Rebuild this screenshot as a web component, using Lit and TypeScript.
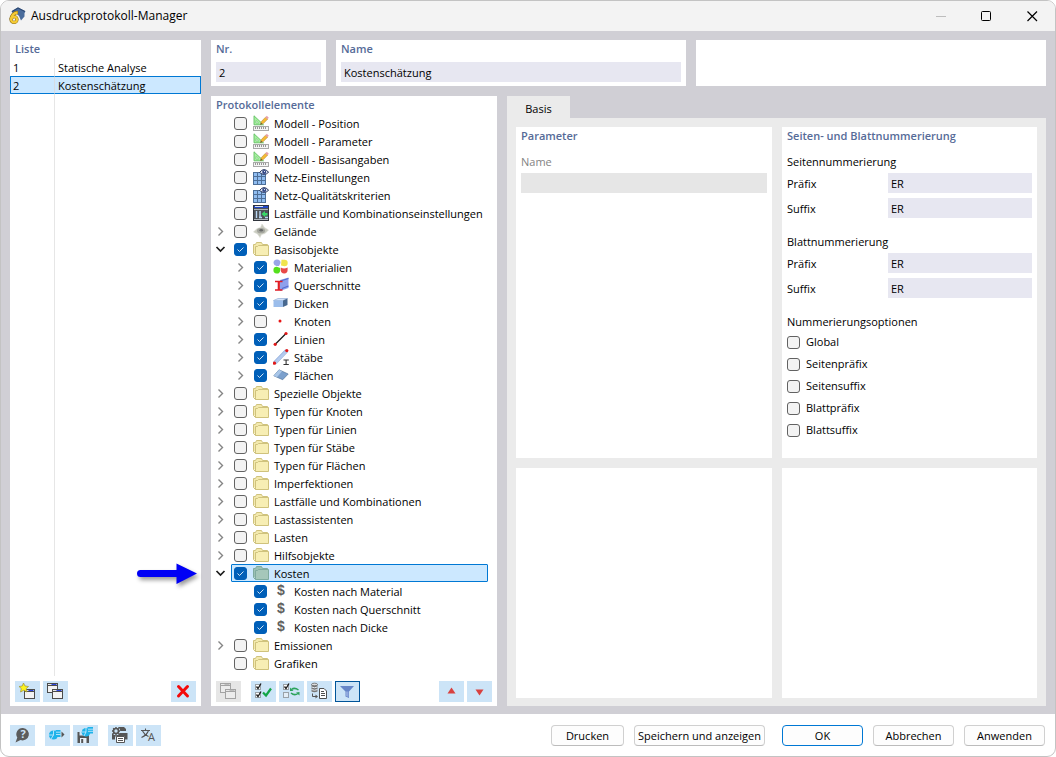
import { LitElement, html, css, svg, nothing, TemplateResult } from "lit";
import { customElement, property, state } from "lit/decorators.js";
import { classMap } from "lit/directives/class-map.js";

interface TreeItem {
  label: string;
  icon: string;
  checked?: boolean;
  expandable?: boolean;
  selected?: boolean;
  children?: TreeItem[];
}

const folder = (label: string): TreeItem => ({ label, icon: "folder", expandable: true });

const TREE: TreeItem[] = [
  { label: "Modell - Position", icon: "model" },
  { label: "Modell - Parameter", icon: "model" },
  { label: "Modell - Basisangaben", icon: "model" },
  { label: "Netz-Einstellungen", icon: "mesh" },
  { label: "Netz-Qualitätskriterien", icon: "mesh" },
  { label: "Lastfälle und Kombinationseinstellungen", icon: "loadcase" },
  { label: "Gelände", icon: "terrain", expandable: true },
  {
    label: "Basisobjekte",
    icon: "folder",
    checked: true,
    expandable: true,
    children: [
      { label: "Materialien", icon: "material", checked: true, expandable: true },
      { label: "Querschnitte", icon: "section", checked: true, expandable: true },
      { label: "Dicken", icon: "thickness", checked: true, expandable: true },
      { label: "Knoten", icon: "node", expandable: true },
      { label: "Linien", icon: "line", checked: true, expandable: true },
      { label: "Stäbe", icon: "member", checked: true, expandable: true },
      { label: "Flächen", icon: "surface", checked: true, expandable: true },
    ],
  },
  folder("Spezielle Objekte"),
  folder("Typen für Knoten"),
  folder("Typen für Linien"),
  folder("Typen für Stäbe"),
  folder("Typen für Flächen"),
  folder("Imperfektionen"),
  folder("Lastfälle und Kombinationen"),
  folder("Lastassistenten"),
  folder("Lasten"),
  folder("Hilfsobjekte"),
  {
    label: "Kosten",
    icon: "folderSelected",
    checked: true,
    expandable: true,
    selected: true,
    children: [
      { label: "Kosten nach Material", icon: "cost", checked: true },
      { label: "Kosten nach Querschnitt", icon: "cost", checked: true },
      { label: "Kosten nach Dicke", icon: "cost", checked: true },
    ],
  },
  folder("Emissionen"),
  { label: "Grafiken", icon: "folder" },
];

const folderShape = (back: string, front: string, edge: string) => svg`
  <path d="M.5 12.5V3.5H2.500L3.500 1.500H8.500L9.500 3.500H14.500V12" fill=${back} stroke=${edge}/>
  <path d="M2.500 14.500H15.500V4.500H5.500L4.500 5.500H2.500Z" fill=${front} stroke=${edge}/>
  <path d="M.5 12.500L2.500 14.500" fill="none" stroke=${edge}/>`;

const windowShape = (x: number, y: number, edge: string, bar: string, fill: string) => svg`
  <rect x=${x} y=${y} width="10" height="9" fill=${fill} stroke=${edge}/>
  <path d="M${x} ${y + 2}h10" stroke=${edge}/>
  <path d="M${x + 1} ${y + 1}h4" stroke="#e8e8e8"/>
  <path d="M${x + 4} ${y + 1}h5" stroke=${bar}/>`;

const tickBox = (x: number, y: number, ticked = true) => svg`
  <rect x=${x} y=${y} width="5" height="5" fill=${ticked ? "#fff" : "#e4eef6"} stroke="#9aa2a8"/>
  ${ticked ? svg`<path d="M${x + 1} ${y + 2}l1.500 2l3-5" fill="none" stroke="#1c1c1c" stroke-width="1.300"/>` : nothing}`;

/* Glyphs of the element tree, on a 16 × 16 grid. */
const TREE_ICONS: Record<string, TemplateResult> = {
  folder: svg`${folderShape("#f3e9ad", "#f7eeb4", "#cfc27c")}`,
  folderSelected: svg`${folderShape("#9cc1b4", "#a5c7ba", "#7fab9f")}`,
  model: svg`
    <path d="M1 .8V9.800H10.500Z" fill="#a6f0a0" stroke="#62c062" stroke-width=".9"/>
    <path d="M3 5.500V8H5.600Z" fill="#fff" stroke="#62c062" stroke-width=".6"/>
    <path d="M7.500 9.500L8.300 6.600L12.500 2.200L14.600 4.200L10.300 8.600Z" fill="#f6ba35" stroke="#a8812f" stroke-width=".5"/>
    <path d="M12.300 2.400L13.800 .8L15.800 2.800L14.400 4.300Z" fill="#e7a0a8"/>
    <path d="M7.300 9.800L8 7.800L9.200 9Z" fill="#554a35"/>
    <rect x=".5" y="11.500" width="15" height="4" fill="#f4f4f4" stroke="#a8a8a8"/>
    <path d="M2.500 12v2M4.500 12v2M6.500 12v2M8.500 12v2M10.500 12v2M12.500 12v2" stroke="#808080" stroke-width=".8"/>`,
  mesh: svg`
    <rect x=".5" y="3.500" width="12" height="12" fill="#8fbcf0" stroke="#4d6f98"/>
    <path d="M4.500 3.500v12M8.500 3.500v12M.5 7.500h12M.5 11.500h12" stroke="#4d6f98"/>
    <path d="M6.500 3.500Q10.800-2.200 15.600 3.200Q11.500 7.500 6.500 3.500Z" fill="#dfe5f2" stroke="#27355c"/>
    <circle cx="11.200" cy="3" r="2" fill="#2e4485"/><circle cx="11.500" cy="2.600" r=".6" fill="#fff"/>`,
  loadcase: svg`
    <rect x=".5" y=".5" width="15" height="15" fill="#4e5358" stroke="#30343c"/>
    <rect x="1" y="1" width="14" height="2" fill="#2148c8"/><path d="M2 1.500h8" stroke="#dbe4f4"/>
    <path d="M1 4.500h14M1 14.500h14" stroke="#aeb5bb"/>
    <path d="M3.500 6v7M7 6v7M6 12.500h3M12 12.500h3" stroke="#b8d6f4" stroke-width="1.400"/>
    <path d="M8.500 9L12 6V8H14.500V10.500H12V12Z" fill="#38d968"/>`,
  terrain: svg`
    <path d="M.5 9L4 5.500L7.500 4.500L9 1L11.500 4.500L15.500 7L12 10.500L8.500 11.500L7 14.500L4.500 11Z" fill="#c9cbc0" stroke="#dcddd5" stroke-width=".6"/>
    <ellipse cx="8" cy="7.700" rx="4" ry="2.600" fill="#a3a59d"/><ellipse cx="8.200" cy="7.300" rx="1.800" ry="1.300" fill="#686a68"/>`,
  material: svg`
    <path d="M.5 4A3.500 3.500 0 0 1 7.500 4L6 7H3.500A3.500 3.500 0 0 1 .5 4Z" fill="#9aa5e8"/>
    <path d="M8.500 .8H11.500A3.200 3.200 0 0 1 11.500 7.200L8 6.500Z" fill="#f0e34c"/>
    <path d="M3.800 7.800L7.200 9V11.500A3.400 3.400 0 1 1 3.800 7.800Z" fill="#55e01c"/>
    <path d="M7.800 8.500Q11 10.500 14.600 8.500V11A3.400 3.400 0 0 1 7.800 11Z" fill="#e84848"/>`,
  section: svg`
    <path d="M7 3L15.500 .5V11L7 14Z" fill="#8fa0ec"/><path d="M7.500 4L15.500 1.500M9 11.500L15.500 9" stroke="#526bd0" stroke-width="1.300"/>
    <path d="M2 4.500H9.500M2 13H9.500" stroke="#e01c24" stroke-width="1.600"/><path d="M5.800 4.500V13" stroke="#e01c24" stroke-width="2.200"/>`,
  thickness: svg`
    <path d="M.5 5.500L5 3.500H14.500L10 5.500Z" fill="#d3e3fa" stroke="#86a5cf" stroke-width=".6"/>
    <path d="M.5 5.500H10V12H.5Z" fill="#9bbdeb"/><path d="M10 5.500L14.500 3.500V10L10 12Z" fill="#47688f"/>`,
  node: svg`<circle cx="7" cy="8" r="1.500" fill="#e81515"/>`,
  line: svg`<path d="M2 13.500L13 2.500" stroke="#181818" stroke-width="1.300"/>
    <circle cx="2.200" cy="13.300" r="1.600" fill="#e01818"/><circle cx="13" cy="2.500" r="1.600" fill="#e01818"/>`,
  member: svg`<path d="M1.500 14L13.500 1.500" stroke="#b4cbef" stroke-width="3.400"/>
    <path d="M1 12.500L12.500 .8M3 15.200L14.700 3" stroke="#8ca6d2" stroke-width=".6"/>
    <circle cx="1.500" cy="14.200" r="1.600" fill="#e01818"/><circle cx="13.800" cy="1.600" r="1.600" fill="#e01818"/>
    <path d="M10.500 11H15.800M13.100 11V15.500M10.500 15.500H15.800" stroke="#333" stroke-width="1.100"/>`,
  surface: svg`<path d="M.8 8.800L6 2.800L15.200 7L9.700 12.700Z" fill="#7ba0cd" stroke="#56789f" stroke-width=".7"/>
    <path d="M.8 8.800L6 2.800L9 4.200L4 10.300Z" fill="#a9c6e8"/>`,
  cost: svg`<text x="8" y="12" text-anchor="middle" font-family="Liberation Sans" font-size="14" font-weight="700" fill="#606060">$</text>`,
};

/* Glyphs of the tool buttons, on the 25 × 21 grid of the button itself. */
const TOOL_ICONS: Record<string, TemplateResult> = {
  add: svg`${windowShape(9.5, 8.5, "#4c4c4c", "#2b45e0", "#f3f3f3")}
    <path d="M8.500 2L10 5L13.500 5.500L11.200 7.600L12 11L8.700 9.300L5.500 11L6.300 7.600L4 5.500L7.200 5Z" fill="#fcf21c" stroke="#9b913a" stroke-width=".7"/>`,
  copy: svg`${windowShape(4.5, 2.5, "#4c4c4c", "#2b45e0", "#f3f3f3")}${windowShape(9.5, 8.5, "#4c4c4c", "#2b45e0", "#f3f3f3")}`,
  copyOff: svg`${windowShape(4.5, 2.5, "#a3a3a3", "#bdbdbd", "#ececec")}${windowShape(9.5, 8.5, "#a3a3a3", "#bdbdbd", "#ececec")}`,
  remove: svg`<path d="M7.500 5.500L16.500 15M16.500 5.500L7.500 15" stroke="#f40909" stroke-width="3" stroke-linecap="round"/>`,
  checkAll: svg`${tickBox(4.5, 3.5)}${tickBox(4.5, 11.5)}
    <path d="M12 11.500L15 14.500L20 7.500" fill="none" stroke="#12a546" stroke-width="2.200"/>`,
  invert: svg`${tickBox(4.5, 3.5)}${tickBox(4.5, 11.5, false)}
    <path d="M12.500 8.500Q15.500 6 19.500 9M19 12.500Q15.500 15 12 12" fill="none" stroke="#2ca35c" stroke-width="1.500"/>
    <path d="M11 6.500V10H14.500ZM20.500 11V14.500L17 11.500Z" fill="#2ca35c"/>`,
  database: svg`
    <path d="M4.500 3.500V10.500Q7.500 12 10.500 10.500V3.500" fill="#777"/>
    <ellipse cx="7.500" cy="3.500" rx="3" ry="1.300" fill="#dcdcdc" stroke="#666" stroke-width=".8"/>
    <path d="M4.500 6Q7.500 7.500 10.500 6M4.500 8.500Q7.500 10 10.500 8.500" fill="none" stroke="#e0e6ec"/>
    <path d="M5.500 12.500V15.500H9" fill="none" stroke="#555"/><path d="M8.500 13.500L11 15.500L8.500 17.500Z" fill="#555"/>
    <path d="M12.500 7.500H17L19.500 10V17.500H12.500Z" fill="#fff" stroke="#4e4e4e"/>
    <path d="M14 10.500H17M14 12.500H18M14 14.500H18" stroke="#4e4e4e"/>`,
  filter: svg`<path d="M5 5H19L14 10.500V17L10.500 15.500V10.500Z" fill="#6686c8"/><path d="M11 10.500H13.500V16L11 15Z" fill="#8fa8dd"/>`,
  up: svg`<path d="M12.500 6.500L16.500 12.500H8.500Z" fill="#d8413f"/>`,
  down: svg`<path d="M12.500 14.500L16.500 8.500H8.500Z" fill="#d8413f"/>`,
  help: svg`<path d="M13 3A6.200 6.200 0 1 1 10.500 15L5.500 17.500L7.300 12.500A6.200 6.200 0 0 1 13 3Z" fill="#5c5c5c"/>
    <text x="13" y="13.200" text-anchor="middle" font-size="11" font-weight="700" fill="#cfe4f7">?</text>`,
  globe: svg`<circle cx="8.500" cy="10" r="4.600" fill="#1fb3ea"/><path d="M8.500 5.500V10H4M8.500 10L6 14" stroke="#d6efff" fill="none" stroke-width=".8"/>
    <path d="M10.500 5H15.500V12H11.500Z" fill="#1fb3ea"/><path d="M11 7.200H15.500M11 9.500H15.500" stroke="#d6efff" stroke-width=".8"/>
    <path d="M16.500 6.500L19.500 9.500L16.500 12.500Z" fill="#555"/>`,
  saveGlobe: svg`<path d="M4.500 7H14L16 9V18H4.500Z" fill="#555"/><rect x="6.500" y="7" width="5" height="3.500" fill="#cfe4f7"/>
    <rect x="7" y="13" width="6.500" height="5" fill="#e7f1fa"/><rect x="8.200" y="14" width="2" height="4" fill="#555"/>
    <circle cx="13" cy="7.200" r="4.300" fill="#1fb3ea"/><path d="M13 3V7H9M13 7L11 11" stroke="#d6efff" fill="none" stroke-width=".8"/>
    <path d="M14.500 2H20V8.500H15Z" fill="#1fb3ea"/><path d="M15 4.200H20M15 6.300H20" stroke="#d6efff" stroke-width=".8"/>`,
  printer: svg`<path d="M10 2H16L18 4V6H10Z" fill="#555"/><path d="M4 8H19.500V14.500H17V11.500H7V14.500H4Z" fill="#555"/>
    <path d="M8.500 11.500H16.500V17.500H8.500Z" fill="#fff" stroke="#555"/><path d="M10 13.500H15M10 15.500H15" stroke="#555"/>
    <circle cx="8" cy="6" r="4.200" fill="#cce4f7"/>
    <circle cx="8" cy="6" r="2.500" fill="none" stroke="#555" stroke-width="1.600"/>
    <path d="M8 2V3.500M8 8.500V10M4 6H5.500M10.500 6H12M5.200 3.200L6.200 4.200M9.800 7.800L10.800 8.800M10.800 3.200L9.800 4.200M6.200 7.800L5.200 8.800" stroke="#555" stroke-width="1.400"/>`,
  language: svg`<path d="M5 5.500H14M9.500 3.500V5.500M12.500 5.500Q11 10 5.500 12.500M6.500 6Q8.500 10 12.500 11.500" fill="none" stroke="#555" stroke-width="1.100"/>
    <text x="15.500" y="16" text-anchor="middle" font-size="11" fill="#555">A</text>`,
};

const base = css`
  * { box-sizing: border-box; }
  button, input { font: inherit; color: inherit; margin: 0; }
`;

const checkbox = css`
  .box {
    appearance: none;
    flex: none;
    width: 13px;
    height: 13px;
    border: 1px solid #626262;
    border-radius: 3px;
    background: #f3f3f3;
  }
  .box:checked {
    border-color: #005fb8;
    background: #005fb8 url("data:image/svg+xml,%3Csvg xmlns='http://www.w3.org/2000/svg' viewBox='0 0 11 11'%3E%3Cpath d='M2.500 5.500L4.500 7.500L8.500 3.500' fill='none' stroke='%23d5e6f5'/%3E%3C/svg%3E");
  }
`;

@customElement("tool-button")
class ToolButton extends LitElement {
  @property() icon = "";
  @property() name = "";
  @property({ type: Boolean }) off = false;
  @property({ type: Boolean }) pressed = false;

  static styles = [base, css`
    :host { display: block; flex: none; }
    .tool {
      display: block;
      width: 25px;
      height: 21px;
      padding: 0;
      border: 0;
      background: #cce4f7;
    }
    .tool:disabled { background: #e6e6e6; }
    .pressed { outline: 1px solid #005499; outline-offset: -1px; }
    .glyph { display: block; width: 25px; height: 21px; }
  `];

  render() {
    return html`<button type="button" class=${classMap({ tool: true, pressed: this.pressed })}
      ?disabled=${this.off} aria-label=${this.name} aria-pressed=${this.pressed}>
      <svg class="glyph" viewBox="0 0 25 21" aria-hidden="true">${TOOL_ICONS[this.icon]}</svg>
    </button>`;
  }
}

@customElement("element-tree")
class ElementTree extends LitElement {
  @state() private items = TREE;

  static styles = [base, checkbox, css`
    :host { display: block; }
    .list { list-style: none; margin: 0; padding: 0; }
    .list .list { padding-left: 20px; }
    .row { display: flex; height: 18px; }
    .toggle, .spacer {
      flex: none;
      width: 20px;
      height: 18px;
      padding: 0;
      border: 0;
      background: none;
    }
    .chevron { display: block; width: 20px; height: 18px; }
    .node {
      position: relative;
      flex: 1;
      display: flex;
      align-items: center;
      padding-left: 2px;
      border: 1px solid transparent;
      border-radius: 1px;
    }
    .selected { border-color: #0078d4; background: #cce8ff; }
    .text { display: flex; align-items: center; white-space: nowrap; }
    .icon { flex: none; width: 16px; height: 16px; margin: 0 5px 0 6px; }
    .caption { line-height: 16px; padding-top: 1px; }
    .pointer {
      position: absolute;
      right: calc(100% + 32px);
      top: -4px;
      width: 64px;
      height: 32px;
      overflow: visible;
      filter: drop-shadow(2px 3px 2px rgba(0, 0, 0, 0.4));
    }
  `];

  private toggle(item: TreeItem) {
    item.checked = !item.checked;
    this.items = [...this.items];
  }

  private row(item: TreeItem, path: string): TemplateResult {
    const open = !!item.children;
    return html`<li role="treeitem" aria-expanded=${item.expandable ? String(open) : nothing}>
      <div class="row">
        ${item.expandable
          ? html`<button type="button" class="toggle" aria-label=${item.label}>
              <svg class="chevron" viewBox="0 0 20 18" aria-hidden="true">
                ${open
                  ? svg`<path d="M5.500 7L9.500 11L13.500 7" fill="none" stroke="#1c1c1c" stroke-width="1.700"/>`
                  : svg`<path d="M7.500 5.500L11.500 9.500L7.500 13.500" fill="none" stroke="#858585" stroke-width="1.400"/>`}
              </svg></button>`
          : html`<span class="spacer"></span>`}
        <div class=${classMap({ node: true, selected: !!item.selected })}>
          <input class="box" type="checkbox" id=${path} .checked=${!!item.checked} @change=${() => this.toggle(item)}>
          <label class="text" for=${path}>
            <svg class="icon" viewBox="0 0 16 16" aria-hidden="true">${TREE_ICONS[item.icon]}</svg>
            <span class="caption">${item.label}</span>
          </label>
          ${item.selected
            ? html`<svg class="pointer" viewBox="0 0 64 32" aria-hidden="true">
                <path d="M4.500 9H40.500V2.500L61 12.500L40.500 23V16H4.500A3.500 3.500 0 0 1 4.500 9Z" fill="#0000f5"/></svg>`
            : nothing}
        </div>
      </div>
      ${open ? html`<ul class="list" role="group">${item.children!.map((c, i) => this.row(c, `${path}-${i}`))}</ul>` : nothing}
    </li>`;
  }

  render() {
    return html`<ul class="list" role="tree" aria-label="Protokollelemente">
      ${this.items.map((item, i) => this.row(item, `n${i}`))}
    </ul>`;
  }
}

@customElement("app-root")
class AppRoot extends LitElement {
  static styles = [base, checkbox, css`
    :host {
      display: block;
      font: 11px/16px "Open Sans", "Noto Sans", sans-serif;
      color: #000;
      background: #fff;
    }
    .window {
      display: flex;
      flex-direction: column;
      min-height: 100vh;
      border: 1px solid #c3c3c3;
      border-radius: 9px;
      overflow: hidden;
      background: #fff;
    }
    .titlebar {
      display: flex;
      align-items: center;
      height: 30px;
      padding-left: 7px;
      background: #f3f3f3;
      font-size: 12px;
    }
    .logo { width: 18px; height: 18px; margin-right: 5px; }
    .title { flex: 1; margin: 0; font: inherit; }
    .control { width: 46px; height: 28px; padding: 0; border: 0; background: none; }
    .control svg { display: block; width: 46px; height: 28px; }

    .body {
      flex: 1;
      display: grid;
      grid-template-columns: 191px minmax(0, 1fr);
      gap: 10px;
      padding: 9px 9px 8px;
      background: #d0cfd5;
    }
    .panel { display: flex; flex-direction: column; background: #fff; }
    .heading {
      margin: 0;
      padding: 0 5px;
      font: 600 11px/18px "Open Sans", "Noto Sans", sans-serif;
      color: #566b98;
    }
    .main { display: flex; flex-direction: column; gap: 10px; min-width: 0; }
    .top {
      display: grid;
      grid-template-columns: 115px minmax(0, 1fr) minmax(0, 1fr);
      gap: 10px;
    }
    .head { padding-bottom: 4px; }
    .head .field { margin: 4px 5px 0; }
    .lower {
      flex: 1;
      display: grid;
      grid-template-columns: 286px minmax(0, 1fr);
      gap: 10px;
    }
    .field {
      display: block;
      height: 20px;
      min-width: 0;
      padding: 1px 3px 0;
      border: 0;
      border-radius: 0;
      background: #e7e7f1;
    }
    .field:disabled { background: #e6e6e6; }

    .records {
      flex: 1;
      margin-bottom: 5px;
      background: linear-gradient(#e6e6e6, #e6e6e6) 44px 0 / 1px 100% no-repeat;
    }
    .table { width: 100%; border-collapse: separate; border-spacing: 0; table-layout: fixed; }
    .table td { height: 18px; padding: 2px 3px 0; border: 1px solid transparent; border-width: 1px 0; line-height: 14px; }
    .table .number { width: 45px; padding-left: 2px; border-width: 1px; border-right-color: #e6e6e6; }
    .table .current { background: #cce8ff; border-color: #0078d4; }
    .table .current.number { border-radius: 1px 0 0 1px; border-right-color: #d6dde4; }
    .table .current.entry { border-right-width: 1px; }

    .toolbar { display: flex; gap: 3px; padding: 0 5px 4px; }
    .apart { margin-left: 7px; }
    .end { margin-left: auto; }
    .elements { flex: 1; margin-right: 9px; }

    .tabs { display: flex; flex-direction: column; min-width: 0; }
    .tab {
      align-self: flex-start;
      width: 63px;
      height: 22px;
      padding: 4px 0 0;
      border: 0;
      background: #ebebeb;
    }
    .sheet {
      flex: 1;
      display: grid;
      grid-template-columns: minmax(0, 256fr) minmax(0, 255fr);
      grid-template-rows: 331fr 230fr;
      gap: 10px;
      padding: 9px 9px 8px;
      background: #ebebeb;
    }
    .group { margin: 0 5px 14px; padding: 0; border: 0; min-width: 0; }
    .group:last-child { margin-bottom: 0; }
    .first { padding-top: 7px; }
    .legend { display: block; padding: 0; margin: 0 0 1px; line-height: 20px; }
    .options .legend { margin: 0; }
    .muted { color: #838383; }
    .wide { width: 100%; }
    .pair { display: grid; grid-template-columns: 101px minmax(0, 1fr); align-items: center; margin-top: 5px; line-height: 20px; }
    .legend + .pair { margin-top: 0; }
    .pair label { padding-top: 1px; line-height: 19px; }
    .option { display: flex; align-items: center; gap: 6px; height: 20px; margin-bottom: 2px; }

    .footer { display: flex; align-items: center; height: 42px; padding: 0 10px 0 9px; }
    .tools { display: flex; gap: 3px; margin-right: 10px; }
    .actions { display: flex; gap: 10px; margin-left: auto; }
    .push {
      min-width: 81px;
      height: 21px;
      padding: 1px 2px 0;
      border: 1px solid #d0d0d0;
      border-bottom-color: #bcbcbc;
      border-radius: 4px;
      background: #fdfdfd;
      line-height: 18px;
      white-space: nowrap;
    }
    .narrow { min-width: 73px; }
    .long { min-width: 131px; }
    .primary { margin-left: 7px; border-color: #0078d4; }
  `];

  private records = [
    { number: 1, name: "Statische Analyse" },
    { number: 2, name: "Kostenschätzung" },
  ];

  @state() private current = 2;

  private pairs(title: string, key: string, first = false) {
    return html`<div class=${classMap({ group: true, first })} role="group" aria-label=${title}>
      <span class="legend">${title}</span>
      ${["Präfix", "Suffix"].map((name) => html`<div class="pair">
        <label for=${key + name}>${name}</label>
        <input class="field" type="text" id=${key + name} value="ER">
      </div>`)}
    </div>`;
  }

  render() {
    return html`<div class="window">
      <header class="titlebar">
        <svg class="logo" viewBox="0 0 18 18" aria-hidden="true">
          <path d="M3.500 4.500L10 .8L17.500 4.500L16.500 6V9.500L13 13.500L11 9L8 6L5.500 7Z" fill="#4a6c9c"/>
          <path d="M4 4.500L10 1L17 4.500" fill="none" stroke="#2b4874" stroke-width="1.200"/>
          <path d="M10 5.500Q4 5.500 3.200 12.500" fill="none" stroke="#8a6c14" stroke-width="3.600"/>
          <circle cx="6" cy="12.500" r="2.900" fill="none" stroke="#8a6c14" stroke-width="3.400"/>
          <path d="M9.600 5.500Q4 5.800 3.200 12.500" fill="none" stroke="#f5cb35" stroke-width="2.300"/>
          <circle cx="6" cy="12.500" r="2.900" fill="none" stroke="#f5cb35" stroke-width="2.300"/>
        </svg>
        <h1 class="title">Ausdruckprotokoll-Manager</h1>
        <button type="button" class="control" aria-label="Minimieren" disabled>
          <svg viewBox="0 0 46 28"><path d="M19 14.500h10" stroke="#bdbdbd"/></svg></button>
        <button type="button" class="control" aria-label="Maximieren">
          <svg viewBox="0 0 46 28"><rect x="18.500" y="9.500" width="9" height="9" rx="1" fill="none" stroke="#000"/></svg></button>
        <button type="button" class="control" aria-label="Schließen">
          <svg viewBox="0 0 46 28"><path d="M18.500 9.500L28 19M28 9.500L18.500 19" fill="none" stroke="#000" stroke-width="1.200"/></svg></button>
      </header>

      <main class="body">
        <section class="panel">
          <h2 class="heading">Liste</h2>
          <div class="records">
            <table class="table" aria-label="Liste"><tbody>
              ${this.records.map((r) => {
                const current = r.number === this.current;
                return html`<tr @click=${() => (this.current = r.number)}>
                  <td class=${classMap({ number: true, current })}>${r.number}</td>
                  <td class=${classMap({ entry: true, current })}>${r.name}</td>
                </tr>`;
              })}
            </tbody></table>
          </div>
          <div class="toolbar">
            <tool-button icon="add" name="Neu"></tool-button>
            <tool-button icon="copy" name="Kopieren"></tool-button>
            <tool-button class="end" icon="remove" name="Löschen"></tool-button>
          </div>
        </section>

        <div class="main">
          <div class="top">
            <section class="panel head">
              <label class="heading" for="nr">Nr.</label>
              <input class="field" type="text" id="nr" value="2">
            </section>
            <section class="panel head">
              <label class="heading" for="name">Name</label>
              <input class="field" type="text" id="name" value="Kostenschätzung">
            </section>
            <section class="panel"></section>
          </div>

          <div class="lower">
            <section class="panel">
              <h2 class="heading">Protokollelemente</h2>
              <element-tree class="elements"></element-tree>
              <div class="toolbar">
                <tool-button icon="copyOff" name="Kopieren" off></tool-button>
                <tool-button class="apart" icon="checkAll" name="Alle auswählen"></tool-button>
                <tool-button icon="invert" name="Auswahl umkehren"></tool-button>
                <tool-button icon="database" name="Aus Vorlage"></tool-button>
                <tool-button icon="filter" name="Filter" pressed></tool-button>
                <tool-button class="end" icon="up" name="Nach oben"></tool-button>
                <tool-button icon="down" name="Nach unten"></tool-button>
              </div>
            </section>

            <section class="tabs">
              <button type="button" class="tab" role="tab" aria-selected="true">Basis</button>
              <div class="sheet" role="tabpanel" aria-label="Basis">
                <section class="panel">
                  <h2 class="heading">Parameter</h2>
                  <div class="group first">
                    <label class="legend muted" for="param">Name</label>
                    <input class="field wide" type="text" id="param" disabled>
                  </div>
                </section>
                <section class="panel">
                  <h2 class="heading">Seiten- und Blattnummerierung</h2>
                  ${this.pairs("Seitennummerierung", "seite", true)}
                  ${this.pairs("Blattnummerierung", "blatt")}
                  <div class="group options" role="group" aria-label="Nummerierungsoptionen">
                    <span class="legend">Nummerierungsoptionen</span>
                    ${["Global", "Seitenpräfix", "Seitensuffix", "Blattpräfix", "Blattsuffix"].map((name) => html`
                      <label class="option"><input class="box" type="checkbox">${name}</label>`)}
                  </div>
                </section>
                <section class="panel"></section>
                <section class="panel"></section>
              </div>
            </section>
          </div>
        </div>
      </main>

      <footer class="footer">
        <div class="tools"><tool-button icon="help" name="Hilfe"></tool-button></div>
        <div class="tools">
          <tool-button icon="globe" name="Importieren"></tool-button>
          <tool-button icon="saveGlobe" name="Speichern"></tool-button>
        </div>
        <div class="tools">
          <tool-button icon="printer" name="Druckeinstellungen"></tool-button>
          <tool-button icon="language" name="Sprache"></tool-button>
        </div>
        <div class="actions">
          <button type="button" class="push narrow">Drucken</button>
          <button type="button" class="push long">Speichern und anzeigen</button>
          <button type="button" class="push primary">OK</button>
          <button type="button" class="push">Abbrechen</button>
          <button type="button" class="push">Anwenden</button>
        </div>
      </footer>
    </div>`;
  }
}
